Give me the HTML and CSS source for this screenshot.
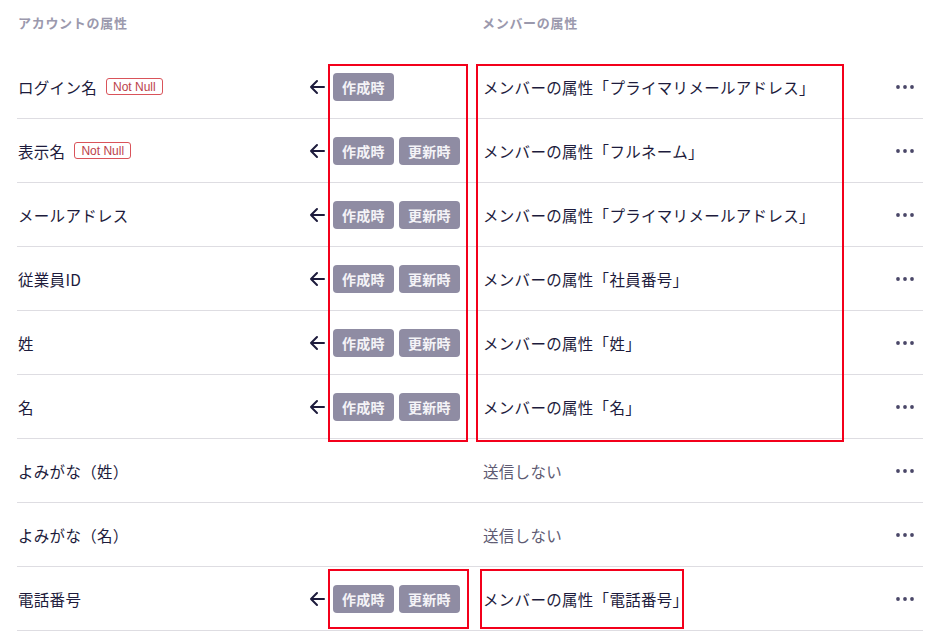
FILE: index.html
```html
<!DOCTYPE html>
<html lang="ja">
<head>
<meta charset="utf-8">
<link rel="stylesheet" href="styles.css">
</head>
<body>
<div class="page">
  <div class="table">
    <div class="head">
      <div class="h-left">アカウントの属性</div>
      <div class="h-right">メンバーの属性</div>
    </div>

    <div class="row">
      <div class="label">ログイン名<span class="badge">Not Null</span></div>
      <div class="arrow"><svg viewBox="0 0 16 16" width="16" height="16"><path d="M15 8H2M8 2L2 8l6 6" fill="none" stroke="currentColor" stroke-width="2" stroke-linecap="round" stroke-linejoin="round"/></svg></div>
      <div class="tags"><span class="tag">作成時</span></div>
      <div class="target">メンバーの属性「プライマリメールアドレス」</div>
      <div class="more"><svg viewBox="0 0 18 6" width="18" height="6"><circle cx="2" cy="3" r="1.9"/><circle cx="9" cy="3" r="1.9"/><circle cx="16" cy="3" r="1.9"/></svg></div>
    </div>

    <div class="row">
      <div class="label">表示名<span class="badge">Not Null</span></div>
      <div class="arrow"><svg viewBox="0 0 16 16" width="16" height="16"><path d="M15 8H2M8 2L2 8l6 6" fill="none" stroke="currentColor" stroke-width="2" stroke-linecap="round" stroke-linejoin="round"/></svg></div>
      <div class="tags"><span class="tag">作成時</span><span class="tag">更新時</span></div>
      <div class="target">メンバーの属性「フルネーム」</div>
      <div class="more"><svg viewBox="0 0 18 6" width="18" height="6"><circle cx="2" cy="3" r="1.9"/><circle cx="9" cy="3" r="1.9"/><circle cx="16" cy="3" r="1.9"/></svg></div>
    </div>

    <div class="row">
      <div class="label">メールアドレス</div>
      <div class="arrow"><svg viewBox="0 0 16 16" width="16" height="16"><path d="M15 8H2M8 2L2 8l6 6" fill="none" stroke="currentColor" stroke-width="2" stroke-linecap="round" stroke-linejoin="round"/></svg></div>
      <div class="tags"><span class="tag">作成時</span><span class="tag">更新時</span></div>
      <div class="target">メンバーの属性「プライマリメールアドレス」</div>
      <div class="more"><svg viewBox="0 0 18 6" width="18" height="6"><circle cx="2" cy="3" r="1.9"/><circle cx="9" cy="3" r="1.9"/><circle cx="16" cy="3" r="1.9"/></svg></div>
    </div>

    <div class="row">
      <div class="label">従業員ID</div>
      <div class="arrow"><svg viewBox="0 0 16 16" width="16" height="16"><path d="M15 8H2M8 2L2 8l6 6" fill="none" stroke="currentColor" stroke-width="2" stroke-linecap="round" stroke-linejoin="round"/></svg></div>
      <div class="tags"><span class="tag">作成時</span><span class="tag">更新時</span></div>
      <div class="target">メンバーの属性「社員番号」</div>
      <div class="more"><svg viewBox="0 0 18 6" width="18" height="6"><circle cx="2" cy="3" r="1.9"/><circle cx="9" cy="3" r="1.9"/><circle cx="16" cy="3" r="1.9"/></svg></div>
    </div>

    <div class="row">
      <div class="label">姓</div>
      <div class="arrow"><svg viewBox="0 0 16 16" width="16" height="16"><path d="M15 8H2M8 2L2 8l6 6" fill="none" stroke="currentColor" stroke-width="2" stroke-linecap="round" stroke-linejoin="round"/></svg></div>
      <div class="tags"><span class="tag">作成時</span><span class="tag">更新時</span></div>
      <div class="target">メンバーの属性「姓」</div>
      <div class="more"><svg viewBox="0 0 18 6" width="18" height="6"><circle cx="2" cy="3" r="1.9"/><circle cx="9" cy="3" r="1.9"/><circle cx="16" cy="3" r="1.9"/></svg></div>
    </div>

    <div class="row">
      <div class="label">名</div>
      <div class="arrow"><svg viewBox="0 0 16 16" width="16" height="16"><path d="M15 8H2M8 2L2 8l6 6" fill="none" stroke="currentColor" stroke-width="2" stroke-linecap="round" stroke-linejoin="round"/></svg></div>
      <div class="tags"><span class="tag">作成時</span><span class="tag">更新時</span></div>
      <div class="target">メンバーの属性「名」</div>
      <div class="more"><svg viewBox="0 0 18 6" width="18" height="6"><circle cx="2" cy="3" r="1.9"/><circle cx="9" cy="3" r="1.9"/><circle cx="16" cy="3" r="1.9"/></svg></div>
    </div>

    <div class="row">
      <div class="label">よみがな（姓）</div>
      <div class="arrow"></div>
      <div class="tags"></div>
      <div class="target muted">送信しない</div>
      <div class="more"><svg viewBox="0 0 18 6" width="18" height="6"><circle cx="2" cy="3" r="1.9"/><circle cx="9" cy="3" r="1.9"/><circle cx="16" cy="3" r="1.9"/></svg></div>
    </div>

    <div class="row">
      <div class="label">よみがな（名）</div>
      <div class="arrow"></div>
      <div class="tags"></div>
      <div class="target muted">送信しない</div>
      <div class="more"><svg viewBox="0 0 18 6" width="18" height="6"><circle cx="2" cy="3" r="1.9"/><circle cx="9" cy="3" r="1.9"/><circle cx="16" cy="3" r="1.9"/></svg></div>
    </div>

    <div class="row">
      <div class="label">電話番号</div>
      <div class="arrow"><svg viewBox="0 0 16 16" width="16" height="16"><path d="M15 8H2M8 2L2 8l6 6" fill="none" stroke="currentColor" stroke-width="2" stroke-linecap="round" stroke-linejoin="round"/></svg></div>
      <div class="tags"><span class="tag">作成時</span><span class="tag">更新時</span></div>
      <div class="target">メンバーの属性「電話番号」</div>
      <div class="more"><svg viewBox="0 0 18 6" width="18" height="6"><circle cx="2" cy="3" r="1.9"/><circle cx="9" cy="3" r="1.9"/><circle cx="16" cy="3" r="1.9"/></svg></div>
    </div>
  </div>

  <div class="mark mark-a"></div>
  <div class="mark mark-b"></div>
  <div class="mark mark-c"></div>
  <div class="mark mark-d"></div>
</div>
</body>
</html>
```

FILE: styles.css
```css
html, body {
  margin: 0;
  padding: 0;
  background: #ffffff;
}

body {
  font-family: "Noto Sans CJK JP", "Noto Sans", sans-serif;
  color: #1d1b3c;
}

.page {
  position: relative;
  width: 934px;
  height: 637px;
  overflow: hidden;
}

.table {
  margin-left: 17px;
  width: 906px;
}

.head {
  display: grid;
  grid-template-columns: 465px 1fr;
  height: 55px;
  padding-top: 14px;
  box-sizing: border-box;
  font-size: 13px;
  line-height: 18px;
  font-weight: 700;
  letter-spacing: 0.7px;
  color: #9b99ad;
}

.h-left { padding-left: 1px; }

.row {
  display: grid;
  grid-template-columns: 292px 16px 157px 1fr 36px;
  align-items: center;
  height: 64px;
  box-sizing: border-box;
  border-bottom: 1px solid #dedde2;
  font-size: 15.5px;
  letter-spacing: 0.3px;
}

.label {
  display: flex;
  align-items: center;
  gap: 9px;
  padding-left: 1px;
}

.badge {
  display: inline-flex;
  align-items: center;
  height: 17px;
  padding: 0 6px;
  box-sizing: border-box;
  border: 1px solid #d9535a;
  border-radius: 3px;
  font-family: "Liberation Sans", "Noto Sans", sans-serif;
  font-size: 12px;
  letter-spacing: 0;
  color: #bb424a;
}

.arrow {
  display: flex;
  align-items: center;
  color: #1d1b3c;
}

.tags {
  display: flex;
  gap: 5px;
  padding-left: 8px;
}

.tag {
  display: inline-flex;
  align-items: center;
  justify-content: center;
  height: 28px;
  padding: 0 9px;
  border-radius: 4px;
  background: #8f8ca3;
  color: #f4f3f7;
  font-size: 14px;
  font-weight: 700;
  letter-spacing: 0.3px;
}

.target {
  padding-left: 1px;
}

.target.muted {
  color: #5e5b73;
}

.more {
  display: flex;
  justify-content: flex-end;
  padding-right: 9px;
  fill: #4a4768;
}

.mark {
  position: absolute;
  border: 2px solid #f3001b;
  box-sizing: border-box;
}

.mark-a { left: 328px; top: 64px; width: 140px; height: 378px; }
.mark-b { left: 476px; top: 64px; width: 368px; height: 378px; }
.mark-c { left: 328px; top: 569px; width: 141px; height: 60px; }
.mark-d { left: 480px; top: 569px; width: 204px; height: 60px; }
```
